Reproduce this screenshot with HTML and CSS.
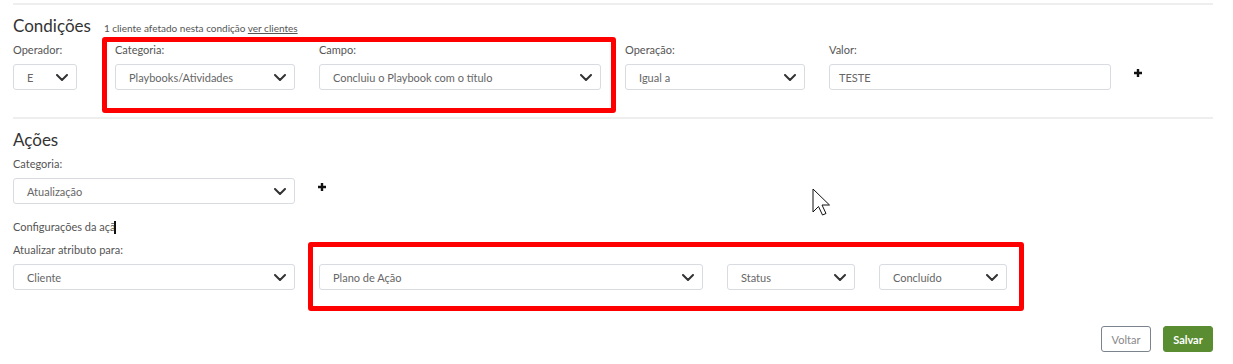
FILE: index.html
```html
<!DOCTYPE html>
<html lang="pt-BR">
<head>
    <meta charset="UTF-8">
    <meta name="viewport" content="width=device-width, initial-scale=1.0">
    <title>Regra - Condições e Ações</title>
    <link rel="stylesheet" href="styles.css">
</head>
<body>

    <div class="rule-page">

        <section class="rule-block">
            <div class="rule-head">
                <h2>Condições</h2>
                <span class="rule-note">1 cliente afetado nesta condição <a href="#">ver clientes</a></span>
            </div>
            <div class="rule-row">
                <div class="field w-78">
                    <label>Operador:</label>
                    <div class="select w-64"><span>E</span><svg class="chevron" viewBox="0 0 12 7"><path d="M1 1 L6 6 L11 1"/></svg></div>
                </div>
                <div class="field w-180">
                    <label>Categoria:</label>
                    <div class="select"><span>Playbooks/Atividades</span><svg class="chevron" viewBox="0 0 12 7"><path d="M1 1 L6 6 L11 1"/></svg></div>
                </div>
                <div class="field w-282">
                    <label>Campo:</label>
                    <div class="select"><span>Concluiu o Playbook com o título</span><svg class="chevron" viewBox="0 0 12 7"><path d="M1 1 L6 6 L11 1"/></svg></div>
                </div>
                <div class="field w-180">
                    <label>Operação:</label>
                    <div class="select"><span>Igual a</span><svg class="chevron" viewBox="0 0 12 7"><path d="M1 1 L6 6 L11 1"/></svg></div>
                </div>
                <div class="field w-282">
                    <label>Valor:</label>
                    <div class="text-input">TESTE</div>
                </div>
                <div class="field">
                    <label>&nbsp;</label>
                    <div class="add-btn"><svg viewBox="0 0 8 8"><path d="M4 0 V8 M0 4 H8"/></svg></div>
                </div>
            </div>
        </section>

        <section class="rule-block">
            <div class="rule-head">
                <h2>Ações</h2>
            </div>
            <div class="rule-row">
                <div class="field w-282">
                    <label>Categoria:</label>
                    <div class="select"><span>Atualização</span><svg class="chevron" viewBox="0 0 12 7"><path d="M1 1 L6 6 L11 1"/></svg></div>
                </div>
                <div class="field">
                    <label>&nbsp;</label>
                    <div class="add-btn"><svg viewBox="0 0 8 8"><path d="M4 0 V8 M0 4 H8"/></svg></div>
                </div>
            </div>

            <div class="config-title">Configurações da açã<span class="caret"></span></div>
            <div class="rule-row">
                <div class="field w-282">
                    <label>Atualizar atributo para:</label>
                    <div class="select"><span>Cliente</span><svg class="chevron" viewBox="0 0 12 7"><path d="M1 1 L6 6 L11 1"/></svg></div>
                </div>
                <div class="field w-384">
                    <label>&nbsp;</label>
                    <div class="select"><span>Plano de Ação</span><svg class="chevron" viewBox="0 0 12 7"><path d="M1 1 L6 6 L11 1"/></svg></div>
                </div>
                <div class="field w-128">
                    <label>&nbsp;</label>
                    <div class="select"><span>Status</span><svg class="chevron" viewBox="0 0 12 7"><path d="M1 1 L6 6 L11 1"/></svg></div>
                </div>
                <div class="field w-128">
                    <label>&nbsp;</label>
                    <div class="select"><span>Concluído</span><svg class="chevron" viewBox="0 0 12 7"><path d="M1 1 L6 6 L11 1"/></svg></div>
                </div>
            </div>
        </section>

        <div class="rule-footer">
            <button class="btn btn-back">Voltar</button>
            <button class="btn btn-save">Salvar</button>
        </div>

        <!-- highlight boxes drawn over the form -->
        <div class="highlight highlight-cond"></div>
        <div class="highlight highlight-action"></div>

        <svg class="mouse-pointer" viewBox="0 0 19 28">
            <path d="M1 1 L1 24 L6.5 18.5 L10.5 27 L14 25.5 L10 17 L17.5 17 Z"/>
        </svg>
    </div>

</body>
</html>
```

FILE: styles.css
```css
body {
    margin: 0;
    font-family: 'Lato', 'Liberation Sans', sans-serif;
    background-color: #fff;
    color: #555;
}

.rule-page {
    position: relative;
    width: 1200px;
    padding: 3px 13px 0;
    height: 361px;
}

.rule-block {
    border-top: 2px solid #eeeeee;
    padding-top: 11px;
}

.rule-block + .rule-block {
    margin-top: 27px;
}

.rule-head {
    display: flex;
    align-items: baseline;
    gap: 13px;
    height: 20px;
}

.rule-head h2 {
    margin: 0;
    font-size: 17px;
    line-height: 20px;
    font-weight: 400;
    color: #333;
}

.rule-note {
    font-size: 10px;
    color: #555;
}

.rule-note a {
    color: #555;
    text-decoration: underline;
}

.rule-row {
    display: flex;
    gap: 24px;
    margin-top: 7px;
}

.field {
    display: flex;
    flex-direction: column;
}

.field label {
    font-size: 11px;
    line-height: 14px;
    color: #555;
    margin-bottom: 7px;
}

.w-64 { width: 64px; }
.w-78 { width: 78px; }
.w-128 { width: 128px; }
.w-180 { width: 180px; }
.w-282 { width: 282px; }
.w-384 { width: 384px; }

.select,
.text-input {
    box-sizing: border-box;
    height: 26px;
    border: 1px solid #d8dbe0;
    border-radius: 3px;
    display: flex;
    align-items: center;
    font-size: 11px;
    color: #666;
    background-color: #fff;
}

.select {
    justify-content: space-between;
    padding: 0 8px 0 13px;
}

.text-input {
    padding: 0 9px;
}

.chevron {
    width: 12px;
    height: 7px;
    fill: none;
    stroke: #333;
    stroke-width: 2;
    stroke-linecap: round;
    stroke-linejoin: round;
}

.add-btn {
    height: 26px;
    display: flex;
    align-items: center;
    margin-top: -4px;
    margin-left: -1px;
}

.add-btn svg {
    width: 8px;
    height: 8px;
    stroke: #111;
    stroke-width: 2.4;
}

.config-title {
    margin-top: 16px;
    font-size: 11px;
    line-height: 14px;
    color: #555;
}

.config-title + .rule-row {
    margin-top: 9px;
}

.caret {
    display: inline-block;
    width: 2px;
    height: 13px;
    margin-left: -1px;
    vertical-align: -3px;
    background-color: #111;
}

.rule-footer {
    display: flex;
    justify-content: flex-end;
    gap: 12px;
    margin-top: 36px;
}

.btn {
    box-sizing: border-box;
    height: 26px;
    width: 50px;
    border-radius: 3px;
    font-family: inherit;
    font-size: 11px;
    padding: 0;
    cursor: pointer;
}

.btn-back {
    background-color: #fff;
    border: 1px solid #7b838c;
    color: #888;
}

.btn-save {
    background-color: #5a8d31;
    border: 1px solid #5a8d31;
    color: #fff;
    font-weight: bold;
}

.highlight {
    position: absolute;
    box-sizing: border-box;
    border: 5px solid #ff0000;
    border-radius: 3px;
}

.highlight-cond {
    left: 102px;
    top: 37px;
    width: 514px;
    height: 76px;
}

.highlight-action {
    left: 308px;
    top: 242px;
    width: 716px;
    height: 69px;
}

.mouse-pointer {
    position: absolute;
    left: 812px;
    top: 188px;
    width: 19px;
    height: 28px;
    fill: #fff;
    stroke: #111;
    stroke-width: 1;
    stroke-linejoin: miter;
}
```
